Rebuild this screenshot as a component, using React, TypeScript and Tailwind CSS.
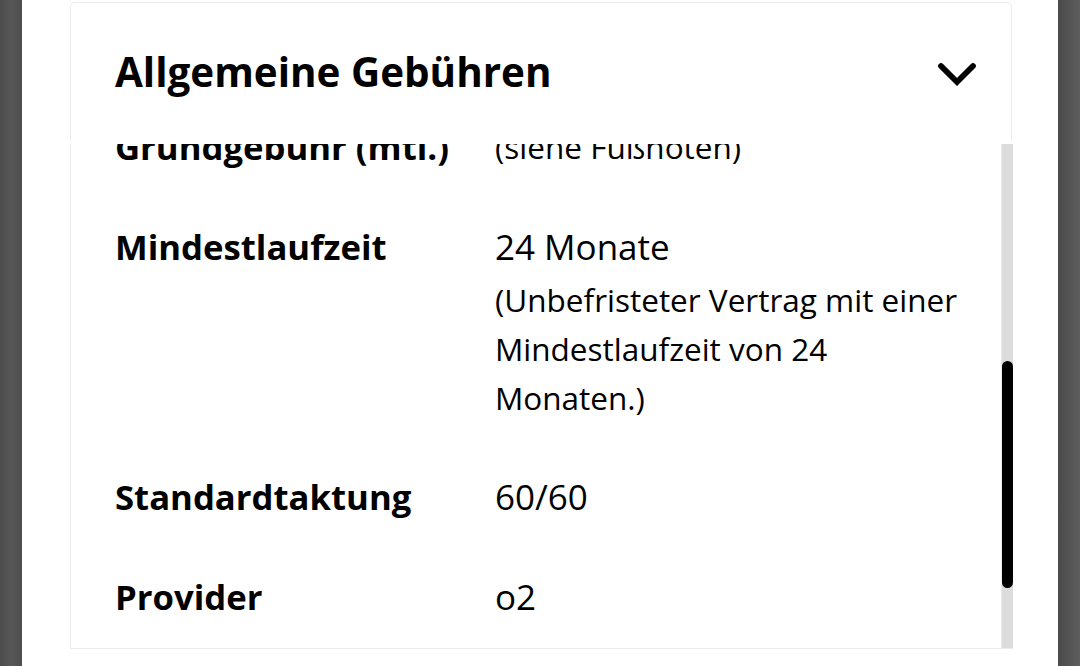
import React from "react";

const rows: { label: string; main?: string; note?: string }[] = [
  { label: "Grundgebühr (mtl.)", note: "(siehe Fußnoten)" },
  {
    label: "Mindestlaufzeit",
    main: "24 Monate",
    note: "(Unbefristeter Vertrag mit einer Mindestlaufzeit von 24 Monaten.)",
  },
  { label: "Standardtaktung", main: "60/60" },
  { label: "Provider", main: "o2" },
];

export default function App() {
  return (
    <div className="flex h-[666px] w-[1080px] overflow-hidden bg-white font-['Open_Sans',sans-serif] text-black">
      <div className="w-[22px] shrink-0 bg-gradient-to-r from-[#4c4c4c] via-[#575757] to-[#4e4e4e]" />
      <div className="flex-1 pl-[48px] pr-[46px] pt-[2px]">
        <div className="flex flex-col">
          <div className="flex h-[139px] items-center justify-between rounded-t-[5px] border border-b-0 border-[#ececec] pl-[44px] pr-[34px]">
            <h2 className="text-[40.4px] font-bold leading-[54px]">Allgemeine Gebühren</h2>
            <svg width="40" height="26" viewBox="0 0 40 26" className="mt-[3px]">
              <polyline
                points="4,5 20,21 36,5"
                fill="none"
                stroke="#000"
                strokeWidth="5.8"
                strokeLinecap="round"
                strokeLinejoin="miter"
              />
            </svg>
          </div>
          <div className="h-[3px]" />
          <div className="mr-[-1px] flex h-[505px] border-b border-l border-[#ececec]">
            <div className="flex-1 overflow-hidden">
              <div className="mt-[-47px] pl-[44px] pr-[26px]">
                {rows.map((r) => (
                  <div key={r.label} className="flex py-[25px]">
                    <div className="w-[380px] shrink-0 text-[34.7px] font-bold leading-[50px]">{r.label}</div>
                    <div className="flex-1">
                      {r.main && <div className="text-[35px] leading-[50px]">{r.main}</div>}
                      {r.note && (
                        <div
                          className={
                            r.main
                              ? "mt-[3px] text-[31.5px] leading-[49px]"
                              : "text-[31.5px] leading-[50px]"
                          }
                        >
                          {r.note}
                        </div>
                      )}
                    </div>
                  </div>
                ))}
              </div>
            </div>
            <div className="w-[12px] shrink-0 border-l border-[#ebebeb] bg-[#dcdcdc]">
              <div className="mt-[217px] h-[227px] w-[11px] rounded-full bg-black" />
            </div>
          </div>
        </div>
      </div>
      <div className="w-[22px] shrink-0 bg-gradient-to-r from-[#4a4a4a] to-[#5e5e5e]" />
    </div>
  );
}
